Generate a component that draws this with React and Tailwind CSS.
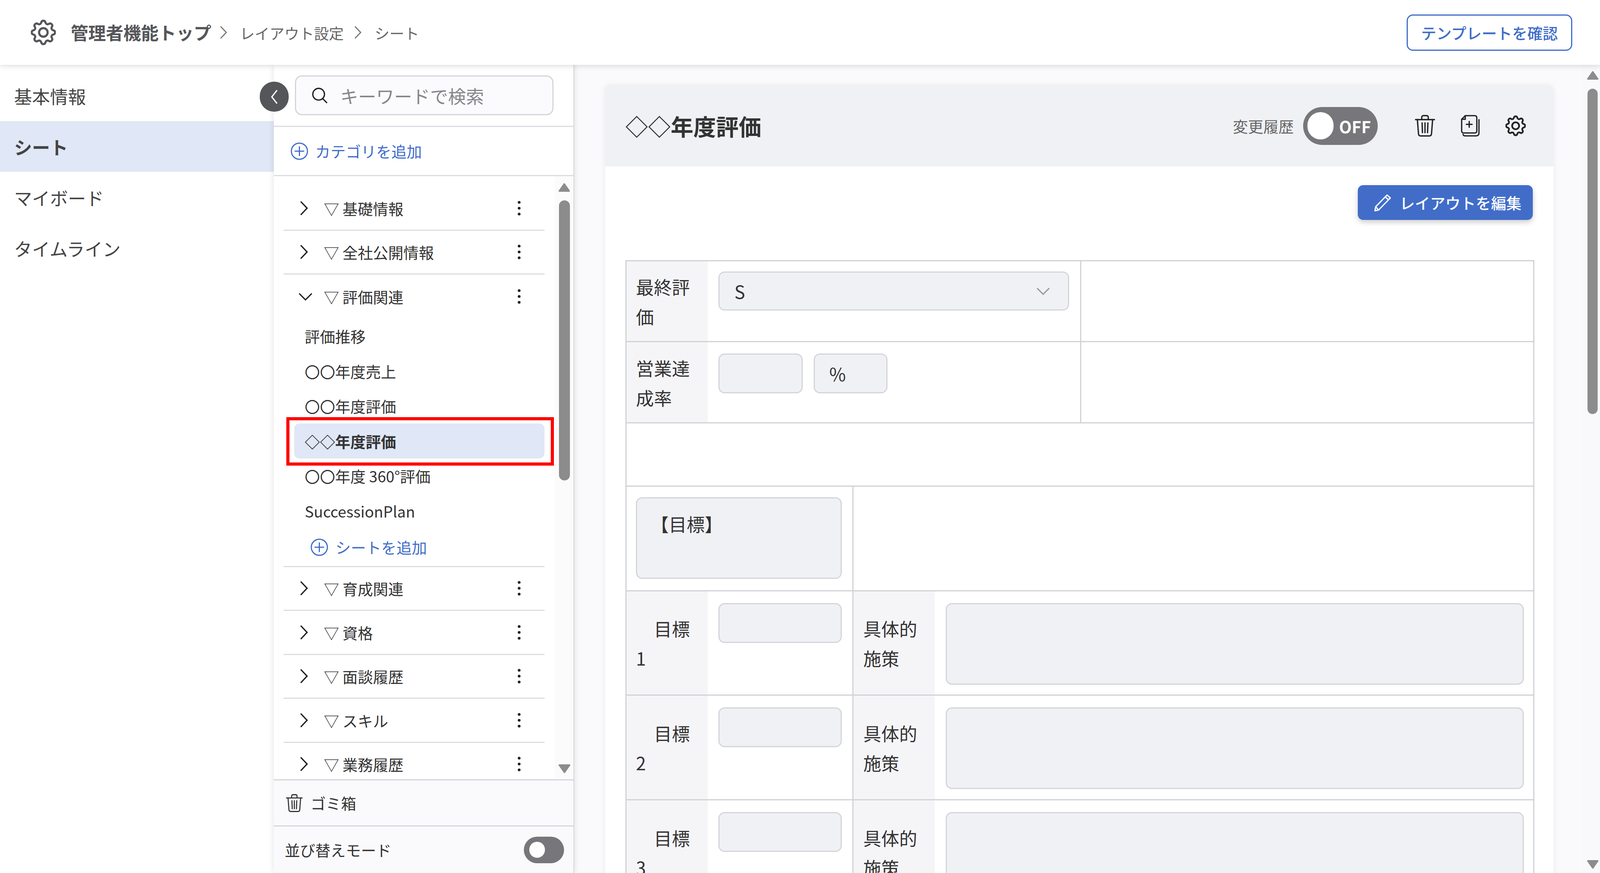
import React from "react";
import { BsGear } from "react-icons/bs";

function Chevron({ dir = "right", className = "" }) {
  const d = { right: "M3 2 L20 20 L3 38", down: "M2 3 L19 20 L36 3", left: "M17 2 L3 20 L17 38" }[dir];
  const vb = { right: "0 0 23 40", down: "0 0 38 23", left: "0 0 20 40" }[dir];
  return (
    <svg viewBox={vb} fill="none" stroke="currentColor" strokeWidth="3.5" strokeLinejoin="miter" className={className}>
      <path d={d} />
    </svg>
  );
}

function Kebab() {
  return (
    <svg viewBox="0 0 10 40" className="w-[10px] h-[40px] text-[#222]" fill="currentColor">
      <circle cx="5" cy="5" r="3.6" />
      <circle cx="5" cy="20" r="3.6" />
      <circle cx="5" cy="35" r="3.6" />
    </svg>
  );
}

function PlusCircle({ className = "" }) {
  return (
    <svg viewBox="0 0 48 48" fill="none" stroke="currentColor" strokeWidth="3.2" className={className}>
      <circle cx="24" cy="24" r="22" />
      <path d="M24 11 V37 M11 24 H37" />
    </svg>
  );
}

function Trash({ className = "" }) {
  return (
    <svg viewBox="0 0 56 60" fill="none" stroke="currentColor" strokeWidth="3.6" strokeLinecap="round" strokeLinejoin="round" className={className}>
      <path d="M2 13 H54" />
      <path d="M19 12 V7 Q19 2 24 2 H32 Q37 2 37 7 V12" />
      <path d="M7 13 L10 52 Q10.5 58 16 58 H40 Q45.5 58 46 52 L49 13" />
      <path d="M20 22 L21 49 M28 22 V49 M36 22 L35 49" />
    </svg>
  );
}

function DocPlus({ className = "" }) {
  return (
    <svg viewBox="0 0 52 60" fill="none" stroke="currentColor" strokeWidth="3.6" strokeLinecap="round" strokeLinejoin="round" className={className}>
      <path d="M12 2 H38 Q44 2 44 8 V44 Q44 50 38 50 H8 Q2 50 2 44 V12 Z" />
      <path d="M12 2 V12 H2" />
      <path d="M50 13 V50 Q50 58 42 58 H12 Q7 58 6 54" />
      <path d="M23 18 V34 M15 26 H31" />
    </svg>
  );
}

function Pencil({ className = "" }) {
  return (
    <svg viewBox="0 0 48 48" fill="none" stroke="currentColor" strokeWidth="3.4" strokeLinejoin="round" className={className}>
      <path d="M36 3 L45 11 L13 44 L3 46 L5 35 Z" />
      <path d="M31 8 L40 16" />
      <path d="M5 35 L13 44" />
    </svg>
  );
}

function Search({ className = "" }) {
  return (
    <svg viewBox="0 0 44 44" fill="none" stroke="currentColor" strokeWidth="3.6" strokeLinecap="round" className={className}>
      <circle cx="19" cy="19" r="16" />
      <path d="M30 31 L41 42" />
    </svg>
  );
}

function Tri({ down = false, className = "" }) {
  return (
    <svg viewBox="0 0 34 26" fill="#8c8c8c" stroke="#8c8c8c" strokeWidth="4" strokeLinejoin="round" className={className}>
      <path d={down ? "M3 3 H31 L17 23 Z" : "M3 23 H31 L17 3 Z"} />
    </svg>
  );
}

function Category({ name, open = false, children }) {
  return (
    <div>
      <div className={open ? "h-[112.5px] flex items-center ml-[25px] mr-[26px] pr-[60px] text-[39px] text-[#333]" : "h-[112.5px] flex items-center ml-[25px] mr-[26px] pr-[60px] text-[39px] text-[#333] border-b-[3px] border-[#dcdde2]"}>
        <div className="w-[103px] shrink-0 pl-[38px] flex items-center">
          {open ? <Chevron dir="down" className="w-[36px] h-[23px] text-[#222]" /> : <Chevron className="w-[22px] h-[40px] ml-[3px] text-[#222]" />}
        </div>
        <span className="flex-1 whitespace-nowrap">▽ {name}</span>
        <Kebab />
      </div>
      {children}
    </div>
  );
}

function Sub({ children, active = false }) {
  return (
    <div className={active ? "h-[89.5px] flex items-center ml-[52px] mr-[26px] pl-[27px] rounded-[14px] bg-[#e0e7f6] font-bold text-[39px] text-[#333]" : "h-[89.5px] flex items-center ml-[79px] text-[39px] text-[#333]"}>
      {children}
    </div>
  );
}

function LabelCell({ children }) {
  return (
    <div className="w-[208px] shrink-0 bg-[#f5f5f8] px-[24px] flex items-center text-[46px] leading-[76px] text-[#333]">
      <div>{children}</div>
    </div>
  );
}

function Field({ className = "", children }) {
  return <div className={"bg-[#f0f1f5] border-[3px] border-[#d4d5da] rounded-[16px] " + className}>{children}</div>;
}

function GoalRow({ n, heightClass }) {
  return (
    <div className={"flex border-b-[3px] border-[#d1d2d6] " + heightClass}>
      <LabelCell>{"　目標 " + n}</LabelCell>
      <div className="w-[373px] shrink-0 pt-[30px] pl-[27px] border-r-[3px] border-[#d1d2d6]">
        <Field className="w-[316px] h-[102px]" />
      </div>
      <div className="w-[208px] shrink-0 bg-[#f5f5f8] px-[25px] flex items-center text-[46px] leading-[76px] text-[#333]">
        <div>具体的施策</div>
      </div>
      <div className="flex-1 pt-[30px] pl-[28px] pr-[24px]">
        <Field className="w-full h-[209px]" />
      </div>
    </div>
  );
}

export default function App() {
  return (
    <div className="w-full h-screen overflow-hidden flex flex-col bg-white text-[#333] font-['Noto_Sans_CJK_JP','Noto_Sans',sans-serif]">
      {/* Header */}
      <header className="relative z-20 h-[166px] shrink-0 bg-white flex items-center justify-between pl-[79px] pr-[71px] shadow-[0_3px_14px_rgba(0,0,0,0.14)]">
        <div className="flex items-center">
          <BsGear strokeWidth="0.35" stroke="currentColor" className="w-[64px] h-[66px] text-[#555659]" />
          <span className="ml-[38px] text-[45px] font-bold text-[#555659] whitespace-nowrap">管理者機能トップ</span>
          <Chevron className="ml-[21px] w-[20px] h-[34px] text-[#777]" />
          <span className="ml-[32px] text-[38px] text-[#666]">レイアウト設定</span>
          <Chevron className="ml-[26px] w-[20px] h-[34px] text-[#777]" />
          <span className="ml-[33px] text-[38px] text-[#666]">シート</span>
        </div>
        <button className="w-[424px] h-[93px] rounded-[16px] border-[3px] border-[#3f6dc9] bg-white text-[39px] font-medium text-[#3f6dc9]">
          テンプレートを確認
        </button>
      </header>

      <div className="relative flex flex-1 min-h-0">
        {/* Left nav */}
        <nav className="w-[701px] shrink-0 pt-[14px] bg-white text-[46px] text-[#444]">
          <div className="h-[130px] flex items-center pl-[36px]">基本情報</div>
          <div className="h-[130px] flex items-center pl-[36px] bg-[#e0e7f6] font-bold">シート</div>
          <div className="h-[130px] flex items-center pl-[36px]">マイボード</div>
          <div className="h-[130px] flex items-center pl-[36px]">タイムライン</div>
        </nav>

        {/* Collapse button */}
        <div className="absolute z-30 left-[665px] top-[43px] w-[74px] h-[77px] rounded-full bg-[#555659] flex items-center justify-center text-white">
          <Chevron dir="left" className="w-[19px] h-[38px]" />
        </div>

        {/* Tree panel */}
        <aside className="relative z-10 w-[769px] shrink-0 flex flex-col bg-white border-r-[2px] border-[#d5d6da] shadow-[0_0_16px_rgba(0,0,0,0.12)]">
          <div className="h-[159px] shrink-0 pt-[27px] pl-[54px] border-b-[3px] border-[#dcdde2]">
            <div className="w-[662px] h-[102px] rounded-[18px] border-[3px] border-[#d4d5da] bg-[#fbfbfd] flex items-center pl-[40px] text-[46px] text-[#85868a]">
              <Search className="w-[41px] h-[44px] text-[#222]" />
              <span className="ml-[32px]">キーワードで検索</span>
            </div>
          </div>
          <div className="h-[126px] shrink-0 flex items-center pl-[43px] border-b-[3px] border-[#dcdde2] text-[39px] text-[#3f6dc9]">
            <PlusCircle className="w-[45px] h-[48px]" />
            <span className="ml-[18px]">カテゴリを追加</span>
          </div>

          <div className="flex-1 min-h-0 flex">
            <div className="flex-1 min-w-0 overflow-hidden pt-[27px]">
              <Category name="基礎情報" />
              <Category name="全社公開情報" />
              <Category name="評価関連" open>
                <Sub>評価推移</Sub>
                <Sub>〇〇年度売上</Sub>
                <Sub>〇〇年度評価</Sub>
                <Sub active>◇◇年度評価</Sub>
                <Sub>〇〇年度 360°評価</Sub>
                <Sub>SuccessionPlan</Sub>
                <div className="h-[99px] ml-[25px] mr-[26px] flex items-center pl-[69px] border-b-[3px] border-[#dcdde2] text-[39px] text-[#3f6dc9]">
                  <PlusCircle className="w-[45px] h-[48px]" />
                  <span className="ml-[19px]">シートを追加</span>
                </div>
              </Category>
              <Category name="育成関連" />
              <Category name="資格" />
              <Category name="面談履歴" />
              <Category name="スキル" />
              <Category name="業務履歴" />
            </div>
            <div className="w-[48px] shrink-0 bg-[#fbfbfc] pt-[16px] pl-[9px] flex flex-col">
              <Tri className="w-[31px] h-[26px]" />
              <div className="w-[28px] ml-[2px] h-[717px] mt-[20px] rounded-full bg-[#8c8c8c]" />
              <div className="flex-1" />
              <Tri down className="w-[32px] h-[26px] mb-[14px]" />
            </div>
          </div>

          <div className="h-[118px] shrink-0 bg-[#fafafc] border-t-[3px] border-[#d5d6da] flex items-center pl-[31px] text-[39px] text-[#333]">
            <Trash className="w-[43px] h-[48px] text-[#333]" />
            <span className="ml-[20px]">ゴミ箱</span>
          </div>
          <div className="h-[122px] shrink-0 bg-[#fafafc] border-t-[3px] border-[#d5d6da] flex items-center justify-between pl-[28px] pr-[24px] text-[39px] text-[#333]">
            <span>並び替えモード</span>
            <div className="w-[103px] h-[68px] rounded-full bg-[#77777b] flex items-center pl-[14px]">
              <div className="w-[40px] h-[41px] rounded-full bg-white" />
            </div>
          </div>

          {/* Red annotation */}
          <div className="absolute left-[32px] top-[902px] w-[685px] h-[124px] border-[8px] border-[#ff0000] z-10 pointer-events-none" />
        </aside>

        {/* Main */}
        <main className="flex-1 min-w-0 flex bg-[#fafafc]">
          <div className="flex-1 min-w-0 overflow-hidden pt-[52px] pl-[79px] pr-[74px]">
            <div className="w-full bg-white rounded-[14px] shadow-[0_0_14px_rgba(0,0,0,0.07)]">
              <div className="h-[208px] rounded-t-[14px] bg-[#f0f1f5] flex items-center justify-between pl-[52px] pr-[71px]">
                <h1 className="text-[58px] font-bold text-[#333] whitespace-nowrap">◇◇年度評価</h1>
                <div className="flex items-center">
                  <span className="text-[39px] text-[#666] whitespace-nowrap">変更履歴</span>
                  <div className="ml-[24px] w-[191px] h-[97px] rounded-full bg-[#77777b] flex items-center pl-[11px]">
                    <div className="w-[67px] h-[70px] rounded-full bg-white" />
                    <span className="ml-[14px] text-[42px] font-bold text-white">OFF</span>
                  </div>
                  <Trash className="ml-[95px] w-[52px] h-[60px] text-[#222]" />
                  <DocPlus className="ml-[66px] w-[48px] h-[60px] text-[#222]" />
                  <BsGear strokeWidth="0.35" stroke="currentColor" className="ml-[66px] w-[52px] h-[56px] text-[#222]" />
                </div>
              </div>

              <div className="pt-[48px] pl-[52px] pr-[49px]">
                <div className="flex justify-end pr-[4px]">
                  <button className="w-[448px] h-[89px] rounded-[14px] bg-[#416dc9] flex items-center pl-[41px] text-[39px] font-medium text-white shadow-[0_6px_14px_rgba(0,0,0,0.2)]">
                    <Pencil className="w-[45px] h-[48px]" />
                    <span className="ml-[21px]">レイアウトを編集</span>
                  </button>
                </div>

                <div className="mt-[103px] border-[3px] border-b-0 border-[#d1d2d6]">
                  <div className="flex h-[207px] border-b-[3px] border-[#d1d2d6]">
                    <LabelCell>最終評価</LabelCell>
                    <div className="w-[956px] shrink-0 pt-[26px] pl-[27px] border-r-[3px] border-[#d1d2d6]">
                      <Field className="w-[898px] h-[100px] flex items-center justify-between pl-[38px] pr-[46px] text-[46px]">
                        <span>S</span>
                        <Chevron dir="down" className="w-[35px] h-[23px] text-[#9a9a9e]" />
                      </Field>
                    </div>
                  </div>
                  <div className="flex h-[208px] border-b-[3px] border-[#d1d2d6]">
                    <LabelCell>営業達成率</LabelCell>
                    <div className="w-[956px] shrink-0 pt-[29px] pl-[27px] flex items-start border-r-[3px] border-[#d1d2d6]">
                      <Field className="w-[216px] h-[102px]" />
                      <Field className="ml-[28px] w-[189px] h-[102px] flex items-center pl-[37px] text-[46px]">%</Field>
                    </div>
                  </div>
                  <div className="h-[162px] border-b-[3px] border-[#d1d2d6]" />
                  <div className="flex h-[268px] border-b-[3px] border-[#d1d2d6]">
                    <div className="w-[581px] shrink-0 pt-[27px] pl-[24px] border-r-[3px] border-[#d1d2d6]">
                      <Field className="w-[527px] h-[209px] pl-[35px] pt-[26px] text-[46px] leading-[76px]">【目標】</Field>
                    </div>
                  </div>
                  <GoalRow n="1" heightClass="h-[267px]" />
                  <GoalRow n="2" heightClass="h-[268px]" />
                  <GoalRow n="3" heightClass="h-[268px]" />
                </div>
              </div>
            </div>
          </div>

          {/* Page scrollbar */}
          <div className="w-[45px] shrink-0 bg-[#f9f9fb] pt-[14px] pl-[11px] flex flex-col">
            <Tri className="w-[31px] h-[26px]" />
            <div className="w-[26px] ml-[2px] h-[833px] mt-[21px] rounded-full bg-[#8c8c8c]" />
            <div className="flex-1" />
            <Tri down className="w-[31px] h-[26px] mb-[9px]" />
          </div>
        </main>
      </div>
    </div>
  );
}
